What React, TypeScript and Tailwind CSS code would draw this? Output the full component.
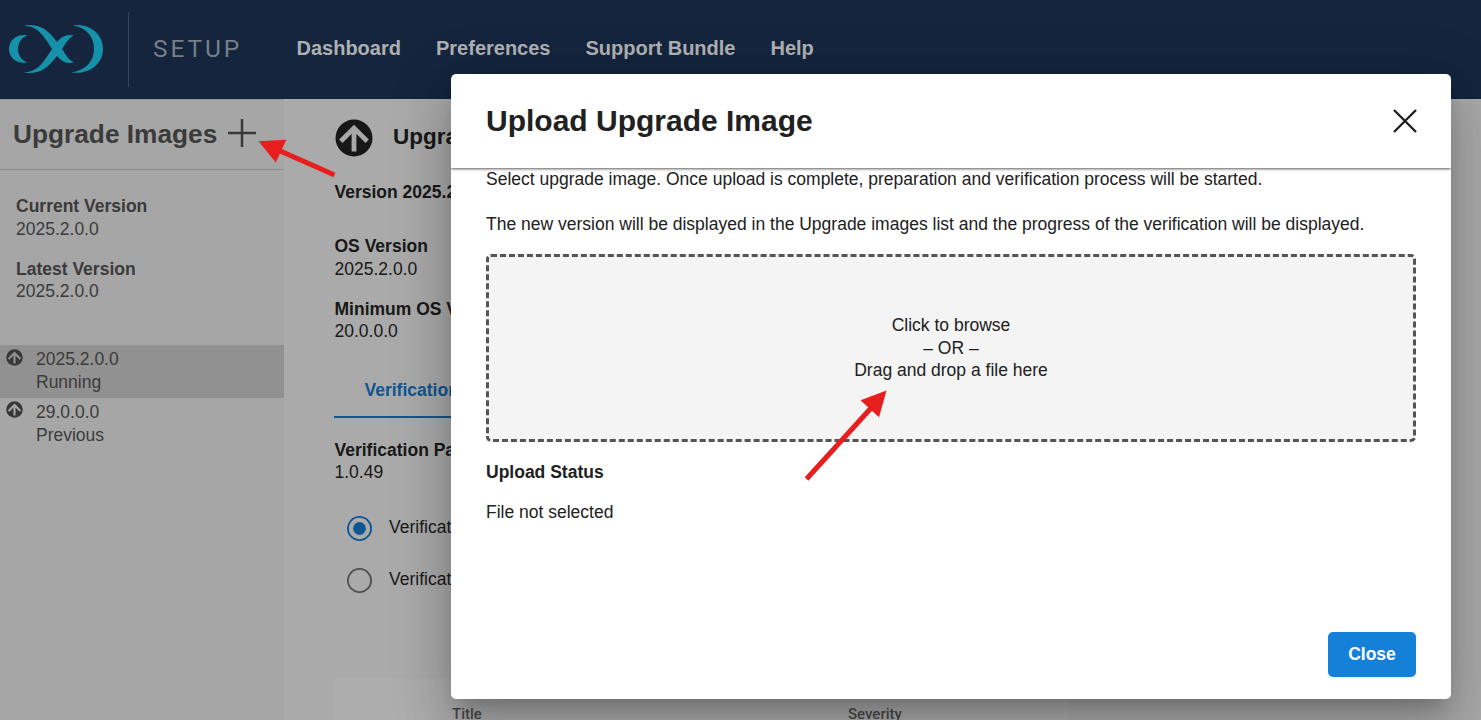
import React from "react";

const navItems = ["Dashboard", "Preferences", "Support Bundle", "Help"];

function Logo() {
  return (
    <svg width="96" height="50" viewBox="8 24 96 50" fill="#1591a9" className="mb-px" aria-hidden="true">
      <path d="M27.5 35.3 C17 33.5 9 40 9 49 C9 58 17 64.5 27.5 62.5 C21.500 60.500 18 55 18 49 C18 43 21.500 37.500 27.5 35.300Z" />
      <path d="M24 25.300 C40 24 47 29 57 42 L62 49 C66.500 55.500 68.500 60 74 62.300 C66 64.500 61.500 61 57 56 L52 49 C43 35 38.500 27 24 25.300Z" />
      <path d="M24 72.700 C40 74 47 69 57 56 L62 49 C66.500 42.500 68.500 38 74 35.500 C66 33.500 61.500 37 57 42 L52 49 C43 63 38.500 71 24 72.700Z" />
      <path d="M73 25.300 C90 23.500 103 34 103 49 C103 64 89 75 71 72.500 C85 70.500 94 62 94 49 C94 36 86 28 73 25.300Z" />
    </svg>
  );
}

function UpIcon({ size, bg, fg }: { size: number; bg: string; fg: string }) {
  return (
    <svg width={size} height={size} viewBox="0 0 38 38" className="block shrink-0" aria-hidden="true">
      <circle cx="19" cy="19" r="18.500" fill={bg} />
      <path d="M19 32.500V9M5.800 22.300 L19 9.100 L32.200 22.300" fill="none" stroke={fg} strokeWidth="4.800" />
    </svg>
  );
}

function Field({ label, value }: { label: string; value: string }) {
  return (
    <div>
      <div className="font-bold whitespace-nowrap">{label}</div>
      <div>{value}</div>
    </div>
  );
}

function ImageRow({ version, state, active }: { version: string; state: string; active?: boolean }) {
  return (
    <div className={active ? "flex h-[53px] bg-[#919191] pt-[3px] pl-[6px]" : "flex h-[53px] pt-[3px] pl-[6px]"}>
      <div className={active ? "pt-[1px]" : "pt-0"}>
        <UpIcon size={17} bg="#383838" fg={active ? "#919191" : "#a6a6a6"} />
      </div>
      <div className="pl-[13px]">
        <div>{version}</div>
        <div>{state}</div>
      </div>
    </div>
  );
}

function Sidebar() {
  return (
    <aside className="w-[284px] shrink-0 border-t border-[#989898] bg-[#a6a6a6] text-[#3b3b3b]">
      <div className="flex h-[70px] items-center border-b border-[#8e8e8e] pb-[2px] pl-[13px]">
        <h2 className="text-[26.250px] leading-[30px] font-bold">Upgrade Images</h2>
        <svg width="28" height="28" viewBox="0 0 28 28" className="mb-px ml-[11px]" aria-hidden="true">
          <path d="M0 14H28M14 0V28" stroke="#383838" strokeWidth="2.500" />
        </svg>
      </div>
      <div className="flex flex-col gap-[17.500px] px-4 pt-[25px]">
        <Field label="Current Version" value="2025.2.0.0" />
        <Field label="Latest Version" value="2025.2.0.0" />
      </div>
      <div className="pt-[42.500px]">
        <ImageRow version="2025.2.0.0" state="Running" active />
        <ImageRow version="29.0.0.0" state="Previous" />
      </div>
    </aside>
  );
}

function Radio({ checked, label }: { checked?: boolean; label: string }) {
  return (
    <div className="flex h-[52px] items-center gap-[16.500px] pl-[12.500px]">
      <svg width="26" height="26" viewBox="0 0 26 26" aria-hidden="true">
        <circle cx="12.500" cy="13.500" r="11.600" fill="none" stroke={checked ? "#0e5794" : "#505050"} strokeWidth="1.900" />
        {checked && <circle cx="12.500" cy="13.500" r="6.400" fill="#0e5794" />}
      </svg>
      <span className="pb-px whitespace-nowrap">{label}</span>
    </div>
  );
}

function Content() {
  return (
    <main className="min-w-0 flex-1 bg-[#aaaaaa] pl-[50px] text-[#181818]">
      <div className="flex h-[78px] items-center gap-[20px] pl-px">
        <UpIcon size={38} bg="#171717" fg="#a8a8a8" />
        <h1 className="pb-[2px] text-[22.500px] leading-[28px] font-bold">Upgra</h1>
      </div>
      <div className="pt-[4px] pl-[0.500px] font-bold">Version 2025.2.0.0</div>
      <div className="flex flex-col gap-[17.500px] pt-[31.500px] pl-[0.500px]">
        <Field label="OS Version" value="2025.2.0.0" />
        <Field label="Minimum OS Version" value="20.0.0.0" />
      </div>
      <div className="mt-[18px] flex h-[57px] w-[180px] items-center border-b-2 border-[#0e5794] pt-[4px] pl-[30.500px] font-bold text-[#0e5794]">
        Verification
      </div>
      <div className="pt-[21px] pl-[0.500px]">
        <Field label="Verification Package" value="1.0.49" />
      </div>
      <div className="pt-[18px]">
        <Radio checked label="Verificat" />
        <Radio label="Verificat" />
      </div>
      <div className="mt-[72px] flex h-[60px] w-[734px] bg-[#adadad] pt-[26.500px] pl-[118px] font-[Roboto] text-[15px] leading-[20px] font-medium text-[#4a4a4a]">
        <span className="w-[396px]">Title</span>
        <span>Severity</span>
      </div>
    </main>
  );
}

function UploadDialog() {
  return (
    <section
      role="dialog"
      aria-label="Upload Upgrade Image"
      className="absolute top-[74px] left-[451px] flex h-[625px] w-[1000px] flex-col rounded-[5px] bg-white text-[#212121] shadow-[0_14px_19px_-9px_rgba(0,0,0,0.2),0_30px_48px_4px_rgba(0,0,0,0.14),0_11px_58px_10px_rgba(0,0,0,0.12)]"
    >
      <header className="flex h-[94px] shrink-0 items-center justify-between rounded-t-[5px] pr-[34px] pl-[35px] shadow-[0_1px_3px_rgba(0,0,0,0.65)] [clip-path:inset(0_0_-6px_0)]">
        <h2 className="text-[30px] leading-[36px] font-bold">Upload Upgrade Image</h2>
        <svg width="24" height="24" viewBox="0 0 24 24" className="mb-px" aria-hidden="true">
          <path d="M1 1L23 23M23 1L1 23" stroke="#1c1c1c" strokeWidth="2.300" />
        </svg>
      </header>
      <div className="flex-1 px-[35px]">
        <p>Select upgrade image. Once upload is complete, preparation and verification process will be started.</p>
        <p className="pt-[22.500px]">
          The new version will be displayed in the Upgrade images list and the progress of the verification will be displayed.
        </p>
        <div className="mt-[18.500px] flex h-[188px] flex-col items-center rounded-[5px] border-3 border-dashed border-[#555555] bg-[#f4f4f4] pt-[57px]">
          <span>Click to browse</span>
          <span>– OR –</span>
          <span>Drag and drop a file here</span>
        </div>
        <div className="pt-[19px] font-bold">Upload Status</div>
        <div className="pt-[17px]">File not selected</div>
      </div>
      <footer className="flex justify-end pr-[35px] pb-[22px]">
        <button className="h-[45px] w-[88px] rounded-[5px] bg-[#1480d8] font-bold text-white">Close</button>
      </footer>
    </section>
  );
}

export default function App() {
  return (
    <div className="relative flex h-[720px] w-[1481px] flex-col overflow-hidden bg-[#aaaaaa] font-['Liberation_Sans',Arial,sans-serif] text-[17.500px] leading-[22.500px]">
      <header className="flex h-[99px] shrink-0 items-center bg-[#14253d] pl-[8px]">
        <Logo />
        <div className="mb-px ml-[24px] h-[75px] w-px bg-[#364357]" />
        <span className="ml-[24px] w-[143.500px] pb-[2px] font-[Roboto] text-[24.500px] leading-[30px] tracking-[2.900px] text-[#797f87]">SETUP</span>
        <nav className="flex gap-[35px] pb-[3px] text-[20px] leading-[24px] font-bold text-[#aeb0b3]">
          {navItems.map((item) => (
            <a key={item}>{item}</a>
          ))}
        </nav>
      </header>
      <div className="flex min-h-0 flex-1">
        <Sidebar />
        <Content />
      </div>
      <UploadDialog />
      <svg className="pointer-events-none absolute inset-0" width="1481" height="720" viewBox="0 0 1481 720" fill="#e81e1e" stroke="#e81e1e" aria-hidden="true">
        <path d="M334.500 175L278 150" strokeWidth="5" />
        <path d="M258.500 141.200L286.300 139.800L275.800 162.500Z" stroke="none" />
        <path d="M806.500 479L872 407" strokeWidth="5" />
        <path d="M886.500 390.500L860.500 400.300L879 417.300Z" stroke="none" />
      </svg>
    </div>
  );
}
